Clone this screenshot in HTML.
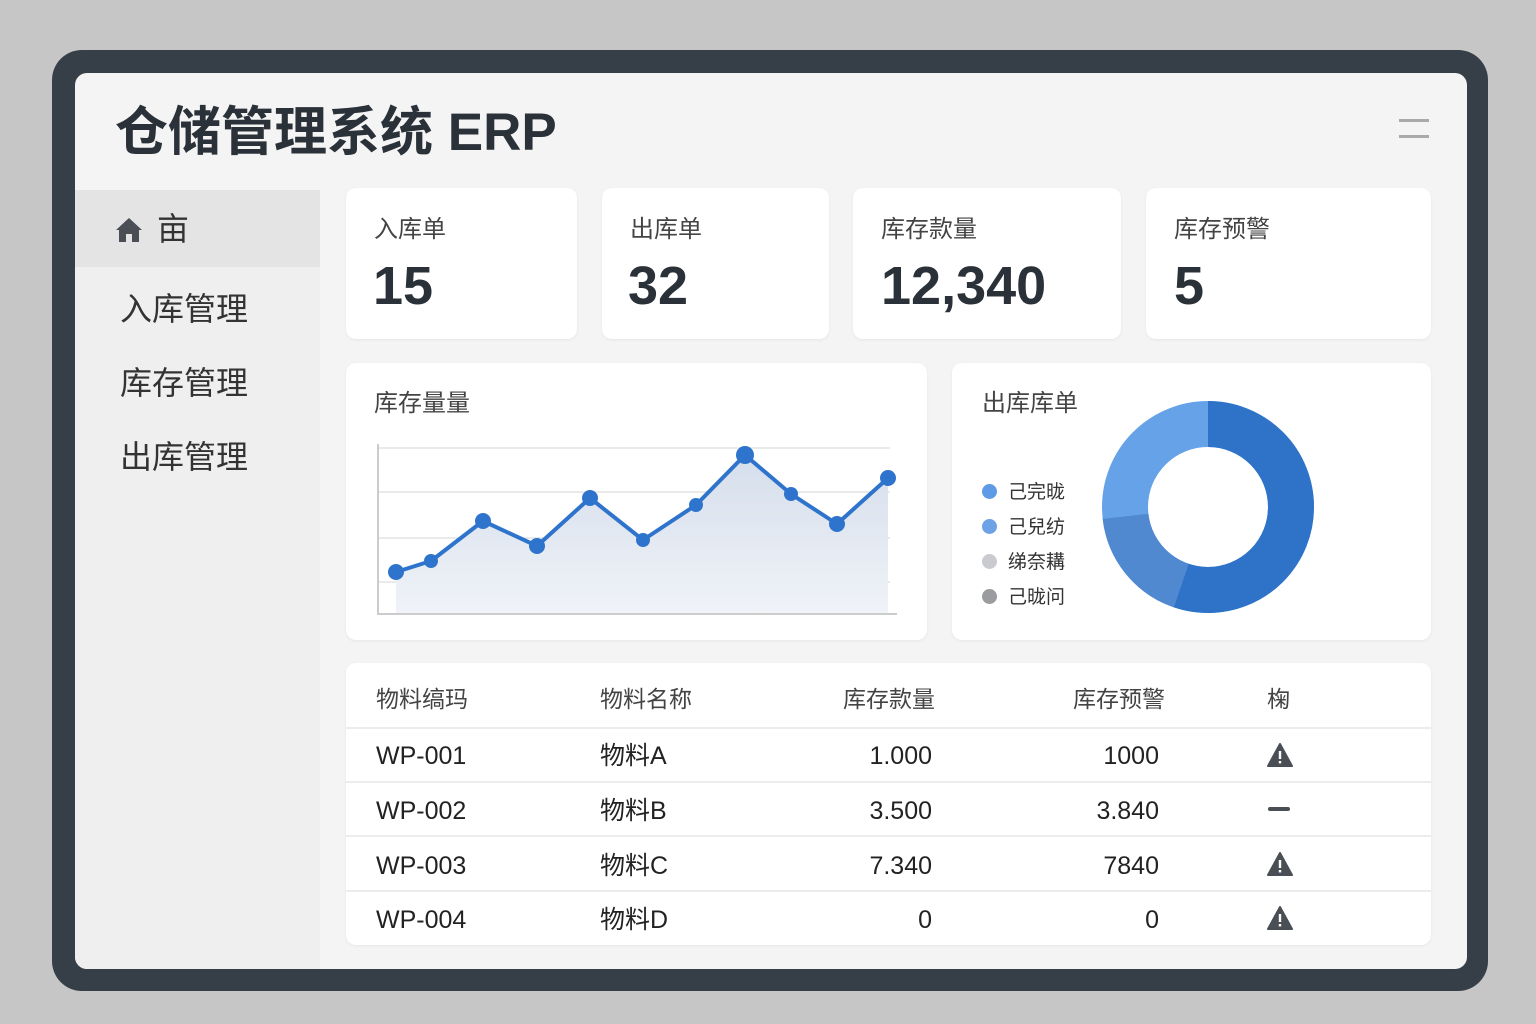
<!DOCTYPE html>
<html><head><meta charset="utf-8"><style>
*{margin:0;padding:0;box-sizing:border-box}
body{width:1536px;height:1024px;background:#c6c6c6;font-family:"Liberation Sans","Noto Sans CJK SC",sans-serif;position:relative;overflow:hidden;color:#333;line-height:1.2}
.frame{position:absolute;left:52px;top:50px;width:1436px;height:941px;background:#363f48;border-radius:30px}
.inner{position:absolute;left:75px;top:73px;width:1392px;height:896px;background:#f4f4f4;border-radius:12px;overflow:hidden}
.side{position:absolute;left:0;top:117px;width:245px;height:780px;background:#efefef}
.abs{position:absolute}
.card{position:absolute;background:#fff;border-radius:10px;box-shadow:0 1px 3px rgba(0,0,0,.06)}
.lbl{position:absolute;font-size:24px;color:#444;line-height:30px}
.num{position:absolute;font-size:54px;font-weight:bold;color:#2b3138}
.nav{position:absolute;left:45px;font-size:32px;color:#333;line-height:40px}
.th{position:absolute;font-size:23px;color:#444;top:21px;line-height:30px}
.td{position:absolute;font-size:25px;color:#222;line-height:30px;height:30px}
.hl{position:absolute;left:0;width:1085px;height:2px;background:#ececec}
.lg{position:absolute;left:56px;font-size:19px;color:#333;line-height:22px}
</style></head><body>
<div class="frame"></div>
<div class="inner">
<div class="abs" style="left:40px;top:28px;font-size:53px;font-weight:bold;color:#2b3138;line-height:64px">仓储管理系统 ERP</div>
<div class="abs" style="left:1324px;top:46px;width:30px;height:3px;background:#aaa"></div>
<div class="abs" style="left:1324px;top:62px;width:30px;height:3px;background:#aaa"></div>
<div class="side"></div>
<div class="abs" style="left:0;top:117px;width:245px;height:77px;background:#e4e4e4"></div>
<svg class="abs" style="left:40px;top:143px" width="28" height="28" viewBox="0 0 28 28"><path d="M14 2 L27 14 L24 14 L24 26 L17 26 L17 18 L11 18 L11 26 L4 26 L4 14 L1 14 Z" fill="#4a4f55"/></svg>
<div class="abs" style="left:82px;top:138px;font-size:32px;color:#333;line-height:36px">亩</div>
<div class="nav" style="top:216px">入库管理</div>
<div class="nav" style="top:290px">库存管理</div>
<div class="nav" style="top:364px">出库管理</div>
</div>
<div class="card" style="left:346px;top:188px;width:231px;height:151px"><div class="lbl" style="left:28px;top:27px">入库单</div><div class="num" style="left:27px;top:66px">15</div></div>
<div class="card" style="left:602px;top:188px;width:227px;height:151px"><div class="lbl" style="left:28px;top:27px">出库单</div><div class="num" style="left:26px;top:66px">32</div></div>
<div class="card" style="left:853px;top:188px;width:268px;height:151px"><div class="lbl" style="left:28px;top:27px">库存款量</div><div class="num" style="left:28px;top:66px">12,340</div></div>
<div class="card" style="left:1146px;top:188px;width:285px;height:151px"><div class="lbl" style="left:28px;top:27px">库存预警</div><div class="num" style="left:28px;top:66px">5</div></div>
<div class="card" style="left:346px;top:363px;width:581px;height:277px"><div class="lbl" style="left:28px;top:26px">库存量量</div></div>
<svg class="abs" style="left:0;top:0" width="1536" height="1024">
<defs><linearGradient id="g" x1="0" y1="0" x2="0" y2="1"><stop offset="0" stop-color="#d5deec"/><stop offset="1" stop-color="#f0f3f8"/></linearGradient></defs>
<g stroke="#e3e3e3" stroke-width="1.5"><line x1="378" y1="448" x2="890" y2="448"/><line x1="378" y1="492" x2="890" y2="492"/><line x1="378" y1="538" x2="890" y2="538"/><line x1="378" y1="582" x2="890" y2="582"/></g>
<path d="M396 572 L431 561 L483 521 L537 546 L590 498 L643 540 L696 505 L745 455 L791 494 L837 524 L888 478 L888 614 L396 614 Z" fill="url(#g)"/>
<line x1="378" y1="444" x2="378" y2="615" stroke="#ccc" stroke-width="2"/><line x1="377" y1="614" x2="897" y2="614" stroke="#ccc" stroke-width="2"/>
<polyline points="396,572 431,561 483,521 537,546 590,498 643,540 696,505 745,455 791,494 837,524 888,478" fill="none" stroke="#2f74cc" stroke-width="4" stroke-linejoin="round"/>
<g fill="#2f74cc"><circle cx="396" cy="572" r="8"/><circle cx="431" cy="561" r="7"/><circle cx="483" cy="521" r="8"/><circle cx="537" cy="546" r="8"/><circle cx="590" cy="498" r="8"/><circle cx="643" cy="540" r="7"/><circle cx="696" cy="505" r="7"/><circle cx="745" cy="455" r="9"/><circle cx="791" cy="494" r="7"/><circle cx="837" cy="524" r="8"/><circle cx="888" cy="478" r="8"/></g>
</svg>
<div class="card" style="left:952px;top:363px;width:479px;height:277px">
<div class="lbl" style="left:30px;top:26px">出库库单</div>
<div class="abs" style="left:30px;top:121px;width:15px;height:15px;border-radius:50%;background:#5e9be6"></div><div class="lg" style="top:119px">己完昽</div>
<div class="abs" style="left:30px;top:156px;width:15px;height:15px;border-radius:50%;background:#6ea2e6"></div><div class="lg" style="top:154px">己兒纺</div>
<div class="abs" style="left:30px;top:191px;width:15px;height:15px;border-radius:50%;background:#c9cbd0"></div><div class="lg" style="top:189px">绨奈耩</div>
<div class="abs" style="left:30px;top:226px;width:15px;height:15px;border-radius:50%;background:#9a9c9f"></div><div class="lg" style="top:224px">己昽问</div>
</div>
<svg class="abs" style="left:0;top:0" width="1536" height="1024">
<circle cx="1208" cy="507" r="83" fill="none" stroke="#66a2e8" stroke-width="46"/>
<circle cx="1208" cy="507" r="83" fill="none" stroke="#5089d0" stroke-width="46" transform="rotate(-90 1208 507)" pathLength="1000" style="stroke-dasharray:0 553 180 1000"/>
<circle cx="1208" cy="507" r="83" fill="none" stroke="#2e73c8" stroke-width="46" pathLength="1000" stroke-dasharray="553 1000" transform="rotate(-90 1208 507)"/>
</svg>
<div class="card" style="left:346px;top:663px;width:1085px;height:282px">
<div class="th" style="left:30px">物料缟玛</div><div class="th" style="left:254px">物料名称</div><div class="th" style="left:497px">库存款量</div><div class="th" style="left:727px">库存预警</div><div class="th" style="left:921px">椈</div>
<div class="hl" style="top:64px"></div><div class="hl" style="top:118px"></div><div class="hl" style="top:172px"></div><div class="hl" style="top:227px"></div>
<div class="td" style="left:30px;top:78px">WP-001</div><div class="td" style="left:254px;top:78px">物料A</div><div class="td" style="right:499px;top:78px">1.000</div><div class="td" style="right:272px;top:78px">1000</div>
<div class="td" style="left:30px;top:133px">WP-002</div><div class="td" style="left:254px;top:133px">物料B</div><div class="td" style="right:499px;top:133px">3.500</div><div class="td" style="right:272px;top:133px">3.840</div>
<div class="td" style="left:30px;top:188px">WP-003</div><div class="td" style="left:254px;top:188px">物料C</div><div class="td" style="right:499px;top:188px">7.340</div><div class="td" style="right:272px;top:188px">7840</div>
<div class="td" style="left:30px;top:242px">WP-004</div><div class="td" style="left:254px;top:242px">物料D</div><div class="td" style="right:499px;top:242px">0</div><div class="td" style="right:272px;top:242px">0</div>
<svg class="abs" style="left:921px;top:80px" width="26" height="24" viewBox="0 0 26 24"><path d="M13 1 L25 23 L1 23 Z" fill="#4a4f55" stroke="#4a4f55" stroke-linejoin="round" stroke-width="2"/><rect x="11.8" y="8" width="2.4" height="8" fill="#fff"/><rect x="11.8" y="18" width="2.4" height="2.4" fill="#fff"/></svg>
<div class="abs" style="left:922px;top:144px;width:22px;height:4px;background:#4a4f55;border-radius:2px"></div>
<svg class="abs" style="left:921px;top:189px" width="26" height="24" viewBox="0 0 26 24"><path d="M13 1 L25 23 L1 23 Z" fill="#4a4f55" stroke="#4a4f55" stroke-linejoin="round" stroke-width="2"/><rect x="11.8" y="8" width="2.4" height="8" fill="#fff"/><rect x="11.8" y="18" width="2.4" height="2.4" fill="#fff"/></svg>
<svg class="abs" style="left:921px;top:243px" width="26" height="24" viewBox="0 0 26 24"><path d="M13 1 L25 23 L1 23 Z" fill="#4a4f55" stroke="#4a4f55" stroke-linejoin="round" stroke-width="2"/><rect x="11.8" y="8" width="2.4" height="8" fill="#fff"/><rect x="11.8" y="18" width="2.4" height="2.4" fill="#fff"/></svg>
</div>
</body></html>
